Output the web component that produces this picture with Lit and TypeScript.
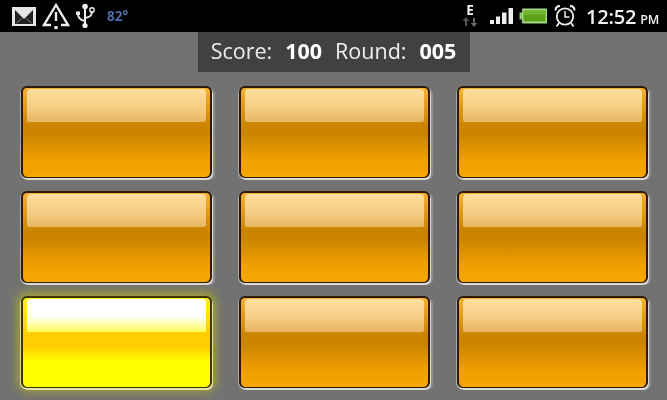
import { LitElement, html, css, svg } from "lit";
import { customElement } from "lit/decorators.js";

@customElement("app-root")
export class AppRoot extends LitElement {
  static styles = css`
    :host { display: block; width: 667px; height: 400px; overflow: hidden; background: #727272; font-family: "Open Sans", "Noto Sans", sans-serif; filter: blur(0.5px); }
    .status { height: 32px; background: #000; display: flex; align-items: center; color: #fff; box-sizing: border-box; padding-left: 11px; }
    .status svg { display: block; flex: none; }
    .left { display: flex; align-items: center; }
    .temp { color: #4f6fa6; font-size: 13.5px; font-weight: 700; margin-left: 11px; margin-top: -1px; }
    .right { margin-left: auto; display: flex; align-items: center; padding-right: 8px; }
    .net { display: flex; flex-direction: column; align-items: center; width: 18px; margin-top: -1px; }
    .net span { font-size: 13.5px; font-weight: 700; line-height: 12px; color: #f2f2f2; }
    .time { font-size: 20px; font-weight: 600; color: #f2f2f2; margin-left: 10px; white-space: nowrap; display: flex; align-items: baseline; gap: 4px; letter-spacing: -0.2px; }
    .time small { font-size: 12.5px; font-weight: 600; }
    .spacer { flex: none; }
    .s5 { width: 5px; } .s6 { width: 6px; } .s11 { width: 11px; } .s4 { width: 4px; }
    .score-wrap { display: flex; justify-content: center; }
    .score { width: 272px; height: 40px; background: #414141; color: #efefef; font-size: 21.5px; display: flex; align-items: center; justify-content: center; gap: 13px; box-sizing: border-box; padding-bottom: 3px; white-space: nowrap; }
    .score b { font-weight: 700; color: #fff; }
    .grid { display: grid; grid-template-columns: repeat(3, 191px); grid-auto-rows: 92px; column-gap: 27px; row-gap: 13px; padding: 14px 0 0 21px; }
    .btn { box-sizing: border-box; border-radius: 6px; border: 2px solid #2e1a06; border-bottom-width: 1.5px; padding: 1px 4px 0; background: linear-gradient(to bottom, #f6b135 0, #cc8500 42%, #c98300 50%, #f0a000 82%, #f7a700 100%); box-shadow: 1px 2px 0 0 #dcd8d2, -1px 1px 0 0 #a8a8a8, 3px 2px 1px 0 #8d9096; }
    .gloss { height: 33px; border-radius: 4px 4px 2px 2px; background: linear-gradient(to bottom, #fedf9c 0, #f5cd85 55%, #e8b763 100%); }
    .on { border-color: #3a3705; background: linear-gradient(to bottom, #ffef20 0, #ffcc00 42%, #ffd000 55%, #ffff00 72%, #ffff00 100%); box-shadow: 1px 2px 0 0 #e6e2a8, -1px 1px 0 0 #d8d8a0, 0 0 8px 4px #a0a03a; }
    .on .gloss { background: linear-gradient(to bottom, #fff 0, #fff 52%, #ffffa0 80%, #ffff55 100%); }
  `;

  private icons = {
    mail: svg`<svg width="26" height="22" viewBox="0 0 26 22"><rect x="1" y="2" width="24" height="19" fill="#e6e6e6"/><path d="M4 19V5l9 9 9-9v14z" fill="#222"/><path d="M5.500 18l5-4.500M20.500 18l-5-4.500" stroke="#888" stroke-width="1"/></svg>`,
    warn: svg`<svg width="28" height="28" viewBox="0 0 28 28"><path d="M14 3L26 23H2z" fill="none" stroke="#eee" stroke-width="2.400"/><rect x="12.800" y="10" width="2.400" height="9" fill="#eee"/><rect x="9" y="21" width="10" height="4" fill="#000"/><rect x="12.400" y="24" width="3.200" height="3.200" fill="#eee"/></svg>`,
    usb: svg`<svg width="20" height="26" viewBox="0 0 20 26"><path d="M9 3V23" stroke="#eee" stroke-width="2"/><circle cx="9" cy="3.500" r="2.800" fill="#eee"/><circle cx="9" cy="22.500" r="2.600" fill="#eee"/><path d="M9 18C3 17 2 14 2 11" fill="none" stroke="#eee" stroke-width="1.800"/><path d="M9 15C15 14 16 12 16 8" fill="none" stroke="#eee" stroke-width="1.800"/><rect x="0" y="8.500" width="4" height="3.500" fill="#eee"/><circle cx="16" cy="7" r="2.200" fill="none" stroke="#eee" stroke-width="1.400"/></svg>`,
    arrows: svg`<svg width="18" height="12" viewBox="0 0 18 12"><path d="M5 1l-3.500 4H4v5h2V5h2.500z" fill="#555"/><path d="M13 11l3.500-4H14V2h-2v5H9.500z" fill="#666"/></svg>`,
    signal: svg`<svg width="24" height="20" viewBox="0 0 24 20"><rect x="0" y="14" width="4" height="4" fill="#eee"/><rect x="6" y="10.500" width="4" height="7.500" fill="#eee"/><rect x="12" y="6.500" width="4.500" height="11.500" fill="#eee"/><rect x="18.500" y="2" width="4.500" height="16" fill="#eee"/></svg>`,
    battery: svg`<svg width="29" height="18" viewBox="0 0 29 18"><rect x="3" y="1.500" width="25" height="15" rx="1" fill="#a6d58a"/><rect x="0.500" y="5.500" width="3" height="7" fill="#8fc470"/><rect x="4.500" y="3.500" width="22" height="11" fill="#5da119"/><rect x="4.500" y="3.500" width="22" height="4" fill="#74b52f"/></svg>`,
    alarm: svg`<svg width="22" height="24" viewBox="0 0 22 24"><circle cx="11" cy="12.500" r="8.200" fill="none" stroke="#eee" stroke-width="1.800"/><path d="M11 7v6h4.500" fill="none" stroke="#eee" stroke-width="1.500"/><path d="M1.500 6.500C1.500 3.500 3.500 2 6 2M20.500 6.500C20.500 3.500 18.500 2 16 2" fill="none" stroke="#eee" stroke-width="2"/><path d="M5 19l-2.500 3.500M17 19l2.500 3.500" stroke="#eee" stroke-width="1.800"/></svg>`,
  };

  render() {
    const lit = 6;
    return html`
      <div class="status">
        <div class="left">
          ${this.icons.mail}
          <span class="spacer s5"></span>${this.icons.warn}
          <span class="spacer s6"></span>${this.icons.usb}
          <span class="temp">82°</span>
        </div>
        <div class="right">
          <div class="net"><span>E</span>${this.icons.arrows}</div>
          <span class="spacer s11"></span>${this.icons.signal}
          <span class="spacer s5"></span>${this.icons.battery}
          <span class="spacer s6"></span>${this.icons.alarm}
          <span class="time">12:52 <small>PM</small></span>
        </div>
      </div>
      <div class="score-wrap">
        <div class="score"><span>Score:</span><b>100</b><span>Round:</span><b>005</b></div>
      </div>
      <div class="grid">
        ${Array.from({ length: 9 }, (_, i) => html`<div class="btn ${i === lit ? "on" : ""}"><div class="gloss"></div></div>`)}
      </div>
    `;
  }
}
